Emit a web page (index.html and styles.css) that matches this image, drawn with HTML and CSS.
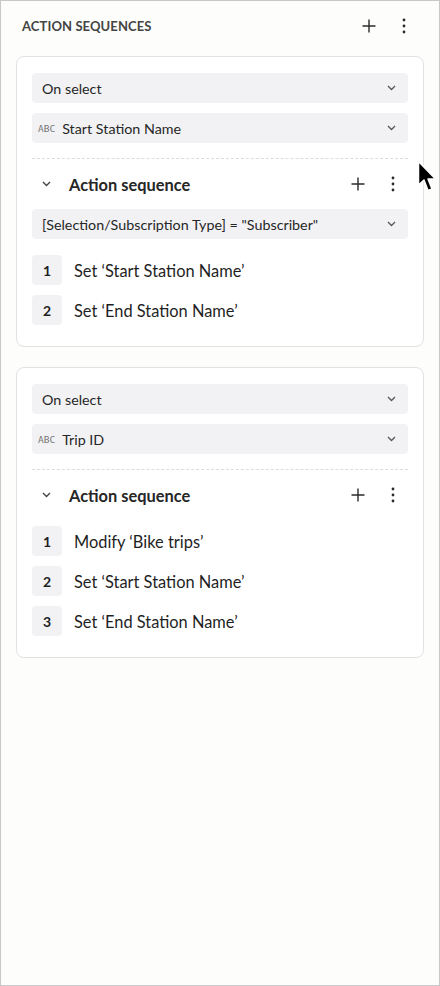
FILE: index.html
```html
<!DOCTYPE html>
<html lang="en">
<head>
    <meta charset="UTF-8">
    <meta name="viewport" content="width=device-width, initial-scale=1.0">
    <title>Action sequences</title>
    <link rel="stylesheet" href="styles.css">
</head>
<body>
    <div class="panel">
        <header class="panel-head">
            <h1>Action sequences</h1>
            <div class="actions">
                <button class="icon-btn" aria-label="Add">
                    <svg width="14" height="14" viewBox="0 0 14 14"><path d="M7 0.5v13M0.5 7h13" stroke="#2b2b2b" stroke-width="1.4" fill="none"/></svg>
                </button>
                <button class="icon-btn" aria-label="More">
                    <svg width="4" height="16" viewBox="0 0 4 16"><circle cx="2" cy="2" r="1.4" fill="#2b2b2b"/><circle cx="2" cy="8" r="1.4" fill="#2b2b2b"/><circle cx="2" cy="14" r="1.4" fill="#2b2b2b"/></svg>
                </button>
            </div>
        </header>

        <!-- 第一个触发器 -->
        <section class="card">
            <div class="select">
                <span class="select-text">On select</span>
                <svg class="chev" width="9" height="6" viewBox="0 0 9 6"><path d="M1 1l3.5 3.5L8 1" stroke="#555" stroke-width="1.3" fill="none"/></svg>
            </div>
            <div class="select select-field">
                <span class="type-tag">ABC</span>
                <span class="select-text">Start Station Name</span>
                <svg class="chev" width="9" height="6" viewBox="0 0 9 6"><path d="M1 1l3.5 3.5L8 1" stroke="#555" stroke-width="1.3" fill="none"/></svg>
            </div>

            <div class="sequence">
                <div class="seq-head">
                    <span class="seq-toggle">
                        <svg width="9" height="6" viewBox="0 0 9 6"><path d="M1 1l3.5 3.5L8 1" stroke="#444" stroke-width="1.4" fill="none"/></svg>
                    </span>
                    <h2>Action sequence</h2>
                    <div class="actions">
                        <button class="icon-btn" aria-label="Add">
                            <svg width="14" height="14" viewBox="0 0 14 14"><path d="M7 0.5v13M0.5 7h13" stroke="#2b2b2b" stroke-width="1.4" fill="none"/></svg>
                        </button>
                        <button class="icon-btn" aria-label="More">
                            <svg width="4" height="16" viewBox="0 0 4 16"><circle cx="2" cy="2" r="1.4" fill="#2b2b2b"/><circle cx="2" cy="8" r="1.4" fill="#2b2b2b"/><circle cx="2" cy="14" r="1.4" fill="#2b2b2b"/></svg>
                        </button>
                    </div>
                </div>
                <div class="select filter">
                    <span class="select-text">[Selection/Subscription Type] = "Subscriber"</span>
                    <svg class="chev" width="9" height="6" viewBox="0 0 9 6"><path d="M1 1l3.5 3.5L8 1" stroke="#555" stroke-width="1.3" fill="none"/></svg>
                </div>
                <ol class="steps">
                    <li><span class="num">1</span>Set ‘Start Station Name’</li>
                    <li><span class="num">2</span>Set ‘End Station Name’</li>
                </ol>
            </div>
        </section>

        <!-- 第二个触发器 -->
        <section class="card">
            <div class="select">
                <span class="select-text">On select</span>
                <svg class="chev" width="9" height="6" viewBox="0 0 9 6"><path d="M1 1l3.5 3.5L8 1" stroke="#555" stroke-width="1.3" fill="none"/></svg>
            </div>
            <div class="select select-field">
                <span class="type-tag">ABC</span>
                <span class="select-text">Trip ID</span>
                <svg class="chev" width="9" height="6" viewBox="0 0 9 6"><path d="M1 1l3.5 3.5L8 1" stroke="#555" stroke-width="1.3" fill="none"/></svg>
            </div>

            <div class="sequence">
                <div class="seq-head">
                    <span class="seq-toggle">
                        <svg width="9" height="6" viewBox="0 0 9 6"><path d="M1 1l3.5 3.5L8 1" stroke="#444" stroke-width="1.4" fill="none"/></svg>
                    </span>
                    <h2>Action sequence</h2>
                    <div class="actions">
                        <button class="icon-btn" aria-label="Add">
                            <svg width="14" height="14" viewBox="0 0 14 14"><path d="M7 0.5v13M0.5 7h13" stroke="#2b2b2b" stroke-width="1.4" fill="none"/></svg>
                        </button>
                        <button class="icon-btn" aria-label="More">
                            <svg width="4" height="16" viewBox="0 0 4 16"><circle cx="2" cy="2" r="1.4" fill="#2b2b2b"/><circle cx="2" cy="8" r="1.4" fill="#2b2b2b"/><circle cx="2" cy="14" r="1.4" fill="#2b2b2b"/></svg>
                        </button>
                    </div>
                </div>
                <ol class="steps">
                    <li><span class="num">1</span>Modify ‘Bike trips’</li>
                    <li><span class="num">2</span>Set ‘Start Station Name’</li>
                    <li><span class="num">3</span>Set ‘End Station Name’</li>
                </ol>
            </div>
        </section>

        <!-- 鼠标指针 -->
        <svg class="cursor" width="22" height="34" viewBox="0 0 22 34">
            <path d="M1.5 1.5L1.5 25L7 20L11 30.5L15 29L11 19L18.5 19Z" fill="#000" stroke="#fff" stroke-width="1.5" stroke-linejoin="round"/>
        </svg>
    </div>
</body>
</html>
```

FILE: styles.css
```css
/* 重置默认样式 */
* {
    margin: 0;
    padding: 0;
    box-sizing: border-box;
}

body {
    font-family: Lato, "Liberation Sans", sans-serif;
    color: #1f1f1f;
    background: #fdfdfb;
}

/* 外层面板 */
.panel {
    position: relative;
    width: 440px;
    height: 986px;
    border: 1px solid #c8c8c8;
    background: #fdfdfb;
}

.panel-head {
    height: 55px;
    display: flex;
    align-items: center;
    padding: 0 24px 5px 21px;
}

.panel-head h1 {
    flex: 1;
    font-size: 13px;
    font-weight: 700;
    text-transform: uppercase;
    color: #444;
    letter-spacing: 0.1px;
}

.actions {
    display: flex;
    align-items: center;
    gap: 13px;
}

.icon-btn {
    width: 22px;
    height: 22px;
    border: none;
    background: none;
    display: flex;
    align-items: center;
    justify-content: center;
    cursor: pointer;
}

/* 触发器卡片 */
.card {
    margin: 0 15px 20px;
    border: 1px solid #e2e2e2;
    border-radius: 8px;
    background: #fff;
    padding: 16px 15px 21px;
}

.select {
    height: 30px;
    border-radius: 4px;
    background: #f2f2f5;
    display: flex;
    align-items: center;
    padding: 0 12px 0 10px;
    font-size: 14.3px;
    color: #262626;
}

.select + .select {
    margin-top: 10px;
}

.select-text {
    flex: 1;
    white-space: nowrap;
}

.select-field {
    padding-left: 6px;
}

.type-tag {
    font-family: "DejaVu Sans Mono", monospace;
    font-size: 9.5px;
    color: #777;
    margin-right: 7px;
}

.sequence {
    margin-top: 15px;
    border-top: 1px dashed #dcdcdc;
    padding-top: 9px;
}

.seq-head {
    height: 32px;
    display: flex;
    align-items: center;
    padding-right: 4px;
}

.seq-toggle {
    width: 28px;
    display: flex;
    justify-content: center;
    margin-right: 9px;
}

.seq-head h2 {
    flex: 1;
    font-size: 16.4px;
    font-weight: 700;
    color: #262626;
}

.filter {
    margin-top: 9px;
}

.steps {
    list-style: none;
    margin-top: 15px;
    display: flex;
    flex-direction: column;
    gap: 10px;
}

.filter + .steps {
    margin-top: 16px;
}

.steps li {
    height: 30px;
    display: flex;
    align-items: center;
    font-size: 16.4px;
}

.num {
    width: 30px;
    height: 30px;
    border-radius: 4px;
    background: #f2f2f5;
    display: flex;
    align-items: center;
    justify-content: center;
    font-size: 14px;
    font-weight: 700;
    margin-right: 12px;
}

.cursor {
    position: absolute;
    left: 416px;
    top: 159px;
}
```
